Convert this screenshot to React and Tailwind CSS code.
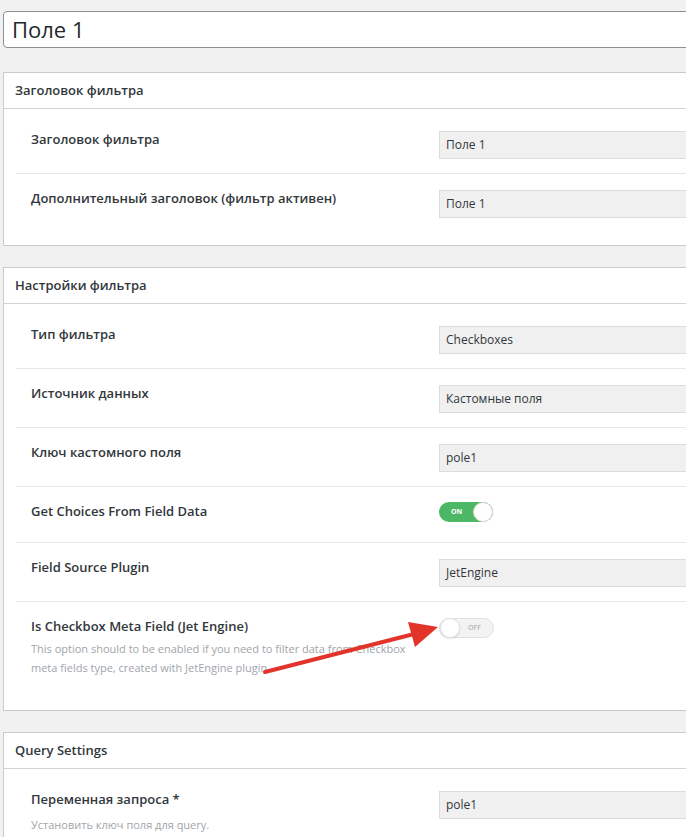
import React from 'react';

const font = { fontFamily: '"Open Sans", "Noto Sans", sans-serif' };

function TextInput({ value }) {
  return (
    <div className="h-[28px] flex-1 flex items-center border border-[#dcdcdc] bg-[#f0f0f0] pl-[6px] text-[12px] text-[#32373c]">
      {value}
    </div>
  );
}

function Toggle({ on }) {
  if (on) {
    return (
      <div className="relative h-[20px] w-[54px] rounded-full bg-[#4cb866]">
        <span className="absolute left-[12px] top-[5px] text-[7px] font-bold leading-[10px] text-white">ON</span>
        <span className="absolute right-0 top-0 h-[20px] w-[20px] rounded-full border border-[#d8d8d8] bg-white" />
      </div>
    );
  }
  return (
    <div className="relative h-[20px] w-[55px] rounded-full border border-[#e0e0e0] bg-[#f3f3f3]">
      <span className="absolute left-0 top-[-1px] h-[20px] w-[20px] rounded-full border border-[#e4e4e4] bg-white shadow-[0_1px_2px_rgba(0,0,0,0.12)]" />
      <span className="absolute right-[12px] top-[4px] text-[7px] font-semibold leading-[10px] text-[#b5b5b5]">OFF</span>
    </div>
  );
}

// pad: tailwind classes for the row's vertical padding
function Row({ label, desc, children, pad = 'pt-4 pb-[14px]', labelShift = 'mt-[-1px]', last }) {
  return (
    <div className={`flex ml-[12px] ${last ? '' : 'border-b border-[#e6e6e6]'} ${pad}`}>
      <div className="w-[423px] shrink-0 pl-[15px] pr-4">
        <div className={`text-[13px] font-semibold leading-[18px] text-[#32373c] ${labelShift}`}>{label}</div>
        {desc && (
          <div className={`max-w-[385px] text-[11px] leading-[19px] text-[#a0a5aa] ${desc.mt}`}>{desc.text}</div>
        )}
      </div>
      <div className="flex flex-1 items-start">{children}</div>
    </div>
  );
}

function Panel({ title, children }) {
  return (
    <div className="border border-[#c8cacc] bg-white">
      <div className="flex h-[36px] items-center border-b border-[#d0d2d4] pl-[11px] text-[13px] font-semibold text-[#32373c]">
        {title}
      </div>
      <div className="pt-[6px] pb-[13px]">{children}</div>
    </div>
  );
}

export default function App() {
  return (
    <div className="relative h-[837px] w-[686px] overflow-hidden bg-[#f1f1f1]" style={font}>
      <div className="w-[760px] pl-[3px] pt-[11px]">
        <div className="flex h-[37px] items-center rounded-[4px] border border-[#8c8f94] bg-white pl-[8px] text-[22px] text-[#23282d]">
          Поле 1
        </div>

        <div className="mt-[24px] flex flex-col gap-[21px]">
          <Panel title="Заголовок фильтра">
            <Row label="Заголовок фильтра">
              <TextInput value="Поле 1" />
            </Row>
            <Row label="Дополнительный заголовок (фильтр активен)" last>
              <TextInput value="Поле 1" />
            </Row>
          </Panel>

          <Panel title="Настройки фильтра">
            <Row label="Тип фильтра">
              <TextInput value="Checkboxes" />
            </Row>
            <Row label="Источник данных">
              <TextInput value="Кастомные поля" />
            </Row>
            <Row label="Ключ кастомного поля">
              <TextInput value="pole1" />
            </Row>
            <Row label="Get Choices From Field Data" pad="pt-[15px] pb-[20px]" labelShift="">
              <Toggle on />
            </Row>
            <Row label="Field Source Plugin">
              <TextInput value="JetEngine" />
            </Row>
            <Row
              label="Is Checkbox Meta Field (Jet Engine)"
              pad="pt-4 pb-[20px]"
              last
              desc={{
                text: 'This option should to be enabled if you need to filter data from Checkbox meta fields type, created with JetEngine plugin',
                mt: 'mt-[4px]',
              }}
            >
              <Toggle />
            </Row>
          </Panel>

          <Panel title="Query Settings">
            <Row
              label="Переменная запроса *"
              last
              desc={{ text: 'Установить ключ поля для query.', mt: 'mt-[7px]' }}
            >
              <TextInput value="pole1" />
            </Row>
          </Panel>
        </div>
      </div>

      {/* red annotation arrow */}
      <svg className="pointer-events-none absolute left-0 top-0" width="686" height="837" viewBox="0 0 686 837">
        <line x1="265" y1="672" x2="414" y2="634" stroke="#e3342b" strokeWidth="4" strokeLinecap="round" />
        <polygon points="438,627 408,622 415,647" fill="#e3342b" />
      </svg>
    </div>
  );
}
